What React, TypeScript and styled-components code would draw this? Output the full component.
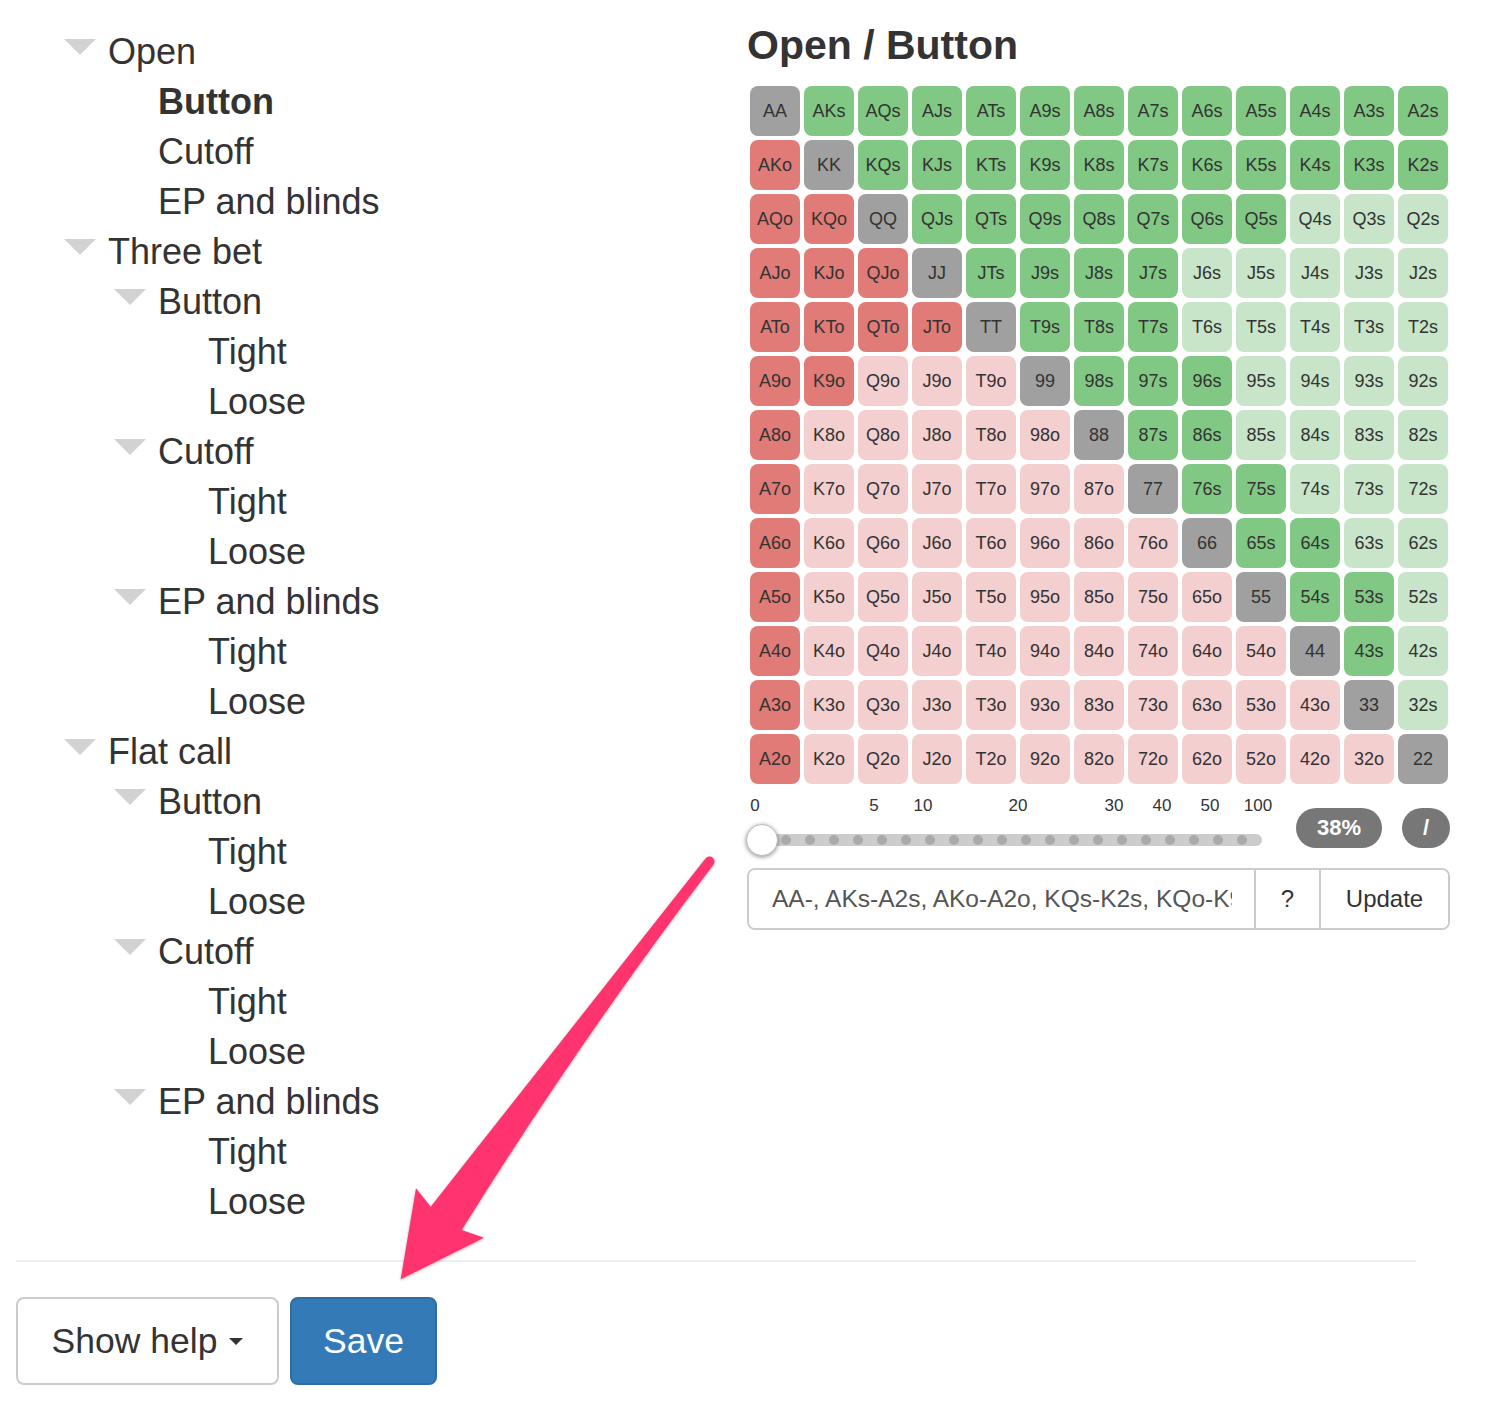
import React from 'react';
import styled, { createGlobalStyle } from 'styled-components';

const GlobalStyle = createGlobalStyle`
  html, body {
    margin: 0;
    padding: 0;
    background: #ffffff;
  }
  body {
    font-family: "Liberation Sans", Helvetica, Arial, sans-serif;
    color: #333333;
    width: 1486px;
    height: 1416px;
    overflow: hidden;
  }
  * { box-sizing: border-box; }
`;

const Page = styled.div`
  position: relative;
  width: 1486px;
  height: 1416px;
  padding: 24px 0 0 16px;
`;

const Main = styled.div`
  display: flex;
  align-items: flex-start;
`;

const LeftCol = styled.div`
  width: 731px;
  padding: 3px 0 0 48px;
`;

const TreeRow = styled.div<{ $level: number; $active?: boolean }>`
  display: flex;
  align-items: center;
  height: 50px;
  padding-left: ${(p) => p.$level * 50}px;
  font-size: 36px;
  font-weight: ${(p) => (p.$active ? 700 : 400)};
  color: #333333;
  white-space: nowrap;
`;

const ToggleSlot = styled.span`
  display: flex;
  width: 44px;
  flex: 0 0 44px;
  align-self: stretch;
  align-items: flex-start;
  padding-top: 12px;
`;

const Triangle = styled.span`
  width: 0;
  height: 0;
  border-left: 16px solid transparent;
  border-right: 16px solid transparent;
  border-top: 16px solid #d2d2d2;
`;

const RightCol = styled.div`
  width: 703px;
`;

const Title = styled.h1`
  margin: -2px 0 0 0;
  font-size: 41px;
  line-height: 46px;
  font-weight: 700;
  color: #333333;
`;

const Grid = styled.div`
  display: grid;
  grid-template-columns: repeat(13, 50px);
  grid-auto-rows: 50px;
  gap: 4px;
  margin: 18px 0 0 3px;
`;

type Kind = 'pair' | 'green' | 'lightgreen' | 'red' | 'pink';

const cellColors: Record<Kind, string> = {
  pair: '#a0a0a0',
  green: '#80c883',
  lightgreen: '#c8e5c9',
  red: '#e07b77',
  pink: '#f4cfcf',
};

const Cell = styled.div<{ $kind: Kind }>`
  display: flex;
  align-items: center;
  justify-content: center;
  border-radius: 8px;
  background: ${(p) => cellColors[p.$kind]};
  font-size: 18px;
  color: #333333;
`;

const SliderRow = styled.div`
  display: flex;
  align-items: flex-start;
  margin-top: 12px;
`;

const SliderBox = styled.div`
  width: 551px;
  display: flex;
  flex-direction: column;
`;

const ScaleLabels = styled.div`
  position: relative;
  height: 20px;
`;

const ScaleLabel = styled.span`
  position: absolute;
  top: 0;
  transform: translateX(-50%);
  font-size: 17px;
  line-height: 20px;
  color: #333333;
`;

const TrackArea = styled.div`
  position: relative;
  height: 32px;
  margin-top: 8px;
`;

const Track = styled.div`
  position: absolute;
  left: 21px;
  top: 10px;
  width: 494px;
  height: 12px;
  border-radius: 6px;
  background: #cccccc;
`;

const Dot = styled.span`
  position: absolute;
  top: 11px;
  width: 10px;
  height: 10px;
  margin-left: -5px;
  border-radius: 50%;
  background: #aaaaaa;
`;

const Handle = styled.span`
  position: absolute;
  left: -1px;
  top: 0;
  width: 32px;
  height: 32px;
  border-radius: 50%;
  background: #ffffff;
  border: 1px solid #bdbdbd;
  box-shadow: 0 1px 4px rgba(0, 0, 0, 0.45);
`;

const Badges = styled.div`
  display: flex;
  gap: 20px;
  margin-top: 12px;
`;

const Badge = styled.span<{ $w: number }>`
  display: flex;
  align-items: center;
  justify-content: center;
  width: ${(p) => p.$w}px;
  height: 40px;
  border-radius: 20px;
  background: #777777;
  color: #ffffff;
  font-size: 22px;
  font-weight: 700;
`;

const InputGroup = styled.div`
  display: flex;
  width: 703px;
  height: 62px;
  margin-top: 12px;
  border: 2px solid #cccccc;
  border-radius: 8px;
  overflow: hidden;
`;

const RangeInput = styled.input`
  flex: 1;
  min-width: 0;
  border: none;
  outline: none;
  padding: 0 22px 0 23px;
  font-family: "Liberation Sans", Helvetica, Arial, sans-serif;
  font-size: 24.5px;
  color: #555555;
  background: #ffffff;
`;

const AddonButton = styled.button<{ $w: number }>`
  width: ${(p) => p.$w}px;
  flex: 0 0 ${(p) => p.$w}px;
  border: none;
  border-left: 2px solid #cccccc;
  background: #ffffff;
  font-family: "Liberation Sans", Helvetica, Arial, sans-serif;
  font-size: 24px;
  color: #333333;
  padding: 0;
`;

const Rule = styled.hr`
  width: 1400px;
  height: 2px;
  margin: 33px 0 0 0;
  border: none;
  background: #eeeeee;
`;

const ButtonRow = styled.div`
  display: flex;
  gap: 11px;
  margin-top: 35px;
`;

const Btn = styled.button<{ $primary?: boolean; $w: number }>`
  display: flex;
  align-items: center;
  justify-content: center;
  width: ${(p) => p.$w}px;
  height: 88px;
  padding: 0;
  border-radius: 8px;
  border: 2px solid ${(p) => (p.$primary ? '#2e6da4' : '#cccccc')};
  background: ${(p) => (p.$primary ? '#337ab7' : '#ffffff')};
  color: ${(p) => (p.$primary ? '#ffffff' : '#333333')};
  font-family: "Liberation Sans", Helvetica, Arial, sans-serif;
  font-size: 35.5px;
`;

const Caret = styled.span`
  display: inline-block;
  width: 0;
  height: 0;
  margin-left: 12px;
  border-left: 7px solid transparent;
  border-right: 7px solid transparent;
  border-top: 7px solid #333333;
`;

const ArrowOverlay = styled.svg`
  position: absolute;
  left: 0;
  top: 0;
  pointer-events: none;
  filter: drop-shadow(0 1px 1.5px rgba(0, 0, 0, 0.3));
`;

type Node = { label: string; level: number; toggle?: boolean; active?: boolean };

const tree: Node[] = [
  { label: 'Open', level: 0, toggle: true },
  { label: 'Button', level: 1, active: true },
  { label: 'Cutoff', level: 1 },
  { label: 'EP and blinds', level: 1 },
  { label: 'Three bet', level: 0, toggle: true },
  { label: 'Button', level: 1, toggle: true },
  { label: 'Tight', level: 2 },
  { label: 'Loose', level: 2 },
  { label: 'Cutoff', level: 1, toggle: true },
  { label: 'Tight', level: 2 },
  { label: 'Loose', level: 2 },
  { label: 'EP and blinds', level: 1, toggle: true },
  { label: 'Tight', level: 2 },
  { label: 'Loose', level: 2 },
  { label: 'Flat call', level: 0, toggle: true },
  { label: 'Button', level: 1, toggle: true },
  { label: 'Tight', level: 2 },
  { label: 'Loose', level: 2 },
  { label: 'Cutoff', level: 1, toggle: true },
  { label: 'Tight', level: 2 },
  { label: 'Loose', level: 2 },
  { label: 'EP and blinds', level: 1, toggle: true },
  { label: 'Tight', level: 2 },
  { label: 'Loose', level: 2 },
];

const RANKS = 'AKQJT98765432'.split('');
const darkSuited = [12, 11, 7, 4, 3, 3, 2, 2, 2, 2, 1, 0, 0];

function cellFor(i: number, j: number): { label: string; kind: Kind } {
  if (i === j) return { label: RANKS[i] + RANKS[j], kind: 'pair' };
  if (j > i) {
    return {
      label: RANKS[i] + RANKS[j] + 's',
      kind: j - i <= darkSuited[i] ? 'green' : 'lightgreen',
    };
  }
  const red =
    j === 0 || (j === 1 && i <= 5) || (j === 2 && i <= 4) || (j === 3 && i === 4);
  return { label: RANKS[j] + RANKS[i] + 'o', kind: red ? 'red' : 'pink' };
}

const scale = [
  { t: '0', x: 8 },
  { t: '5', x: 127 },
  { t: '10', x: 176 },
  { t: '20', x: 271 },
  { t: '30', x: 367 },
  { t: '40', x: 415 },
  { t: '50', x: 463 },
  { t: '100', x: 511 },
];

const dots = Array.from({ length: 20 }, (_, k) => 39 + k * 24);

export default function App() {
  const cells: { label: string; kind: Kind }[] = [];
  for (let i = 0; i < 13; i++) for (let j = 0; j < 13; j++) cells.push(cellFor(i, j));

  return (
    <Page>
      <GlobalStyle />
      <Main>
        <LeftCol>
          {tree.map((n, idx) => (
            <TreeRow key={idx} $level={n.level} $active={n.active}>
              <ToggleSlot>{n.toggle && <Triangle />}</ToggleSlot>
              {n.label}
            </TreeRow>
          ))}
        </LeftCol>
        <RightCol>
          <Title>Open / Button</Title>
          <Grid>
            {cells.map((c) => (
              <Cell key={c.label} $kind={c.kind}>
                {c.label}
              </Cell>
            ))}
          </Grid>
          <SliderRow>
            <SliderBox>
              <ScaleLabels>
                {scale.map((s) => (
                  <ScaleLabel key={s.t} style={{ left: s.x }}>
                    {s.t}
                  </ScaleLabel>
                ))}
              </ScaleLabels>
              <TrackArea>
                <Track />
                {dots.map((x) => (
                  <Dot key={x} style={{ left: x }} />
                ))}
                <Handle />
              </TrackArea>
            </SliderBox>
            <Badges>
              <Badge $w={86}>38%</Badge>
              <Badge $w={48}>/</Badge>
            </Badges>
          </SliderRow>
          <InputGroup>
            <RangeInput
              readOnly
              value="AA-, AKs-A2s, AKo-A2o, KQs-K2s, KQo-K9o, QJs-Q5s, QJo-QTo, JTs-J7s, JTo"
            />
            <AddonButton $w={65}>?</AddonButton>
            <AddonButton $w={129}>Update</AddonButton>
          </InputGroup>
        </RightCol>
      </Main>
      <Rule />
      <ButtonRow>
        <Btn $w={263}>
          Show help
          <Caret />
        </Btn>
        <Btn $w={147} $primary>
          Save
        </Btn>
      </ButtonRow>
      <ArrowOverlay width="1486" height="1416" viewBox="0 0 1486 1416">
        <path
          d="M 705.5 858.5 A 4.6 4.6 0 0 1 713.5 864.5 Q 580 1040 461.7 1230 L 484 1237.7 L 400.7 1279.3 L 416 1188.3 L 430.7 1206.7 Q 570 1030 705.5 858.5 Z"
          fill="#ff336e"
        />
      </ArrowOverlay>
    </Page>
  );
}
